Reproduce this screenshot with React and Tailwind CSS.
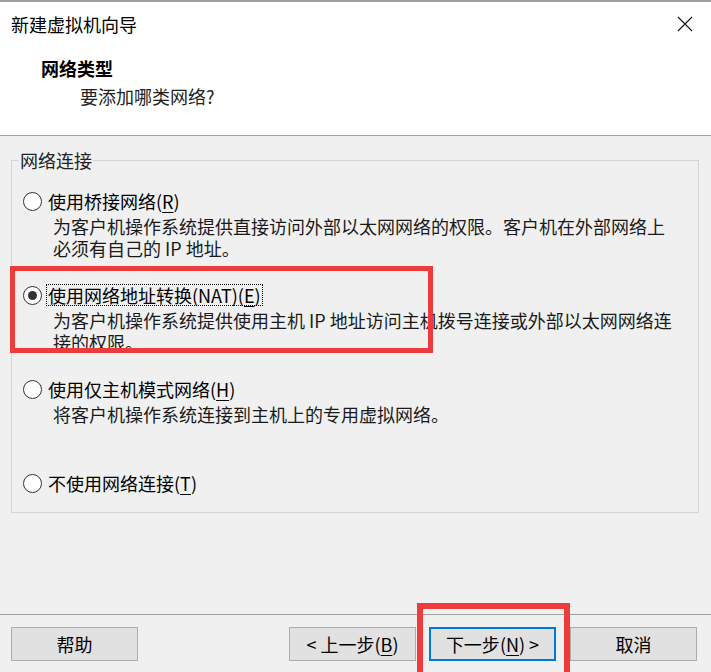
import React from 'react';

const FONT = "font-[family-name:'Noto_Sans_CJK_SC','Noto_Sans',sans-serif]";

function Radio({ checked }) {
  return (
    <span className="w-[19px] h-[19px] rounded-full border border-[#333] bg-white flex items-center justify-center shrink-0">
      {checked && <span className="w-[9px] h-[9px] rounded-full bg-[#333]" />}
    </span>
  );
}

function Key({ k }) {
  return (
    <>
      (<span className="underline underline-offset-[3px]">{k}</span>)
    </>
  );
}

function Option({ checked, label, k, suffix, lines, focus, className = '' }) {
  return (
    <div className={className}>
      <div className="flex items-center h-[22px] ml-[11px]">
        <Radio checked={checked} />
        <span
          className={`ml-[4px] px-[1px] leading-[20px] ${
            focus ? 'border border-dotted border-black' : 'border border-transparent'
          }`}
        >
          {label}
          {suffix}
          <Key k={k} />
        </span>
      </div>
      {lines && (
        <div className="pl-[41px] mt-[3px] leading-[22px] min-h-[44px] text-[#1a1a1a]">
          {lines.map((l) => (
            <div key={l} className="whitespace-nowrap">{l}</div>
          ))}
        </div>
      )}
    </div>
  );
}

function Btn({ children, primary, className = '' }) {
  return (
    <button
      className={`w-[127px] h-[34px] text-[18px] leading-none text-black bg-[#e1e1e1] ${
        primary ? 'border-2 border-[#0078d7]' : 'border border-[#adadad]'
      } ${className}`}
    >
      {children}
    </button>
  );
}

export default function App() {
  return (
    <div className={`relative w-[711px] h-[672px] overflow-hidden flex flex-col text-[18px] text-black bg-[#f0f0f0] ${FONT}`}>
      {/* header */}
      <div className="h-[136px] shrink-0 bg-white border-t-2 border-[#a0a0a0] border-b border-b-[#a0a0a0] relative">
        <div className="flex items-start justify-between">
          <div className="ml-[11px] mt-[11px] leading-[22px]">新建虚拟机向导</div>
          <svg className="mt-[14px] mr-[18px]" width="16" height="16" viewBox="0 0 16 16">
            <path d="M1 1 L15 15 M15 1 L1 15" stroke="#111" strokeWidth="1.1" fill="none" />
          </svg>
        </div>
        <div className="ml-[41px] mt-[22px] leading-[22px] font-bold">网络类型</div>
        <div className="ml-[80px] mt-[6px] leading-[22px] text-[#222]">要添加哪类网络?</div>
      </div>

      {/* body */}
      <div className="flex-1">
        <div className="relative mt-[24px] ml-[11px] mr-[12px] border border-[#d5d5d5] pt-[29px] pb-[18px]">
          <span className="absolute left-[7px] top-[-12px] px-[1px] leading-[22px] bg-[#f0f0f0] text-[#222]">
            网络连接
          </span>
          <Option
            label="使用桥接网络"
            k="R"
            lines={['为客户机操作系统提供直接访问外部以太网网络的权限。客户机在外部网络上', '必须有自己的 IP 地址。']}
          />
          <Option
            className="mt-[25px]"
            checked
            focus
            label="使用网络地址转换"
            suffix="(NAT)"
            k="E"
            lines={['为客户机操作系统提供使用主机 IP 地址访问主机拨号连接或外部以太网网络连', '接的权限。']}
          />
          <Option
            className="mt-[25px]"
            label="使用仅主机模式网络"
            k="H"
            lines={['将客户机操作系统连接到主机上的专用虚拟网络。']}
          />
          <Option className="mt-[25px]" label="不使用网络连接" k="T" />
        </div>
      </div>

      {/* footer */}
      <div className="h-[58px] shrink-0 border-t border-[#a0a0a0] pt-[12px] flex items-start">
        <Btn className="ml-[11px]">帮助</Btn>
        <Btn className="ml-[151px]">
          &lt; 上一步<Key k="B" />
        </Btn>
        <Btn primary className="ml-[13px]">
          下一步<Key k="N" /> &gt;
        </Btn>
        <Btn className="ml-[14px]">取消</Btn>
      </div>

      {/* annotation boxes */}
      <div className="absolute left-[10px] top-[266px] w-[423px] h-[87px] border-[5px] border-[#ee3b3b] pointer-events-none" />
      <div className="absolute left-[417px] top-[603px] w-[153px] h-[90px] border-[6px] border-[#ee3b3b] pointer-events-none" />
    </div>
  );
}
